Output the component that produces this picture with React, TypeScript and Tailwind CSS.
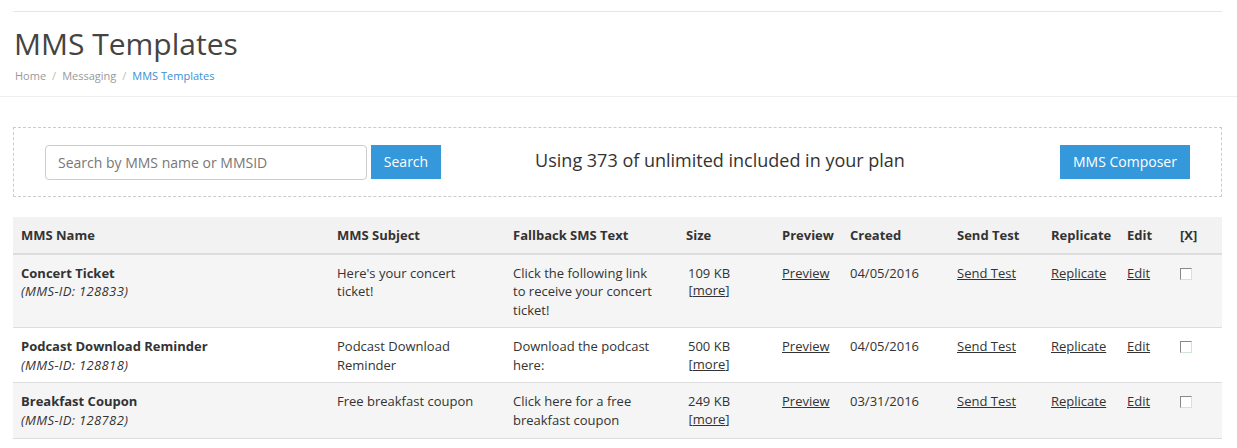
import React from 'react';

interface Row {
  name: string;
  id: string;
  subject: string;
  fallback: string;
  size: string;
  created: string;
}

const rows: Row[] = [
  {
    name: 'Concert Ticket',
    id: '128833',
    subject: "Here's your concert ticket!",
    fallback: 'Click the following link to receive your concert ticket!',
    size: '109 KB',
    created: '04/05/2016',
  },
  {
    name: 'Podcast Download Reminder',
    id: '128818',
    subject: 'Podcast Download Reminder',
    fallback: 'Download the podcast here:',
    size: '500 KB',
    created: '04/05/2016',
  },
  {
    name: 'Breakfast Coupon',
    id: '128782',
    subject: 'Free breakfast coupon',
    fallback: 'Click here for a free breakfast coupon',
    size: '249 KB',
    created: '03/31/2016',
  },
];

const headers = [
  { label: 'MMS Name', w: 'w-[316px]' },
  { label: 'MMS Subject', w: 'w-[176px]' },
  { label: 'Fallback SMS Text', w: 'w-[173px]' },
  { label: 'Size', w: 'w-[96px]' },
  { label: 'Preview', w: 'w-[68px]' },
  { label: 'Created', w: 'w-[107px]' },
  { label: 'Send Test', w: 'w-[94px]' },
  { label: 'Replicate', w: 'w-[76px]' },
  { label: 'Edit', w: 'w-[53px]' },
  { label: '[X]', w: 'w-[50px]' },
];

const TableLink = ({ children }: { children: React.ReactNode }) => (
  <a href="#" className="underline text-[#333] hover:text-[#3498db]">
    {children}
  </a>
);

export default function App() {
  return (
    <div className="min-h-screen bg-white text-[#333] font-['Open_Sans',sans-serif] text-[13px] leading-[1.42857]">
      {/* page header */}
      <div className="border-b border-[#eee] pb-[12px]">
        <div className="mx-[13px] mt-[11px] border-t border-[#e6e6e6] w-[1209px]">
          <h1 className="mt-[14px] text-[30px] leading-[36px] font-normal text-[#444] pl-[1px]">MMS Templates</h1>
          <div className="mt-[6px] pl-[2px] text-[11px] leading-[16px] text-[#999]">
            <a href="#" className="hover:underline">Home</a>
            <span className="mx-[6px] text-[#bbb]">/</span>
            <a href="#" className="hover:underline">Messaging</a>
            <span className="mx-[6px] text-[#bbb]">/</span>
            <span className="text-[#3a8fd3]">MMS Templates</span>
          </div>
        </div>
      </div>

      {/* toolbar */}
      <div className="mx-[13px] mt-[30px] w-[1209px] h-[70px] border border-dashed border-[#ccc] flex items-center pl-[31px] pr-[31px]">
        <input
          type="text"
          placeholder="Search by MMS name or MMSID"
          className="w-[322px] h-[35px] mt-[1px] border border-[#ccc] rounded-[4px] px-[12px] text-[14px] text-[#555] placeholder:text-[#777] outline-none"
        />
        <button className="ml-[4px] w-[70px] h-[34px] -mt-[1px] bg-[#3498db] text-white text-[14px] hover:bg-[#2c87c7]">
          Search
        </button>
        <div className="flex-1 text-center text-[18px] text-[#333] pr-[61px] -mt-[3px]">
          Using 373 of unlimited included in your plan
        </div>
        <button className="w-[130px] h-[34px] -mt-[1px] bg-[#3498db] text-white text-[14px] hover:bg-[#2c87c7]">
          MMS Composer
        </button>
      </div>

      {/* table */}
      <table className="mx-[13px] mt-[20px] w-[1209px] border-collapse table-fixed">
        <thead>
          <tr className="bg-[#f2f2f2] border-b-2 border-[#ddd]">
            {headers.map((h) => (
              <th key={h.label} className={`${h.w} text-left font-bold px-[8px] pt-[9px] pb-[8px]`}>
                {h.label}
              </th>
            ))}
          </tr>
        </thead>
        <tbody>
          {rows.map((r, i) => (
            <tr key={r.id} className={`${i % 2 === 0 ? 'bg-[#f5f5f5]' : 'bg-white'} border-b border-[#ddd] align-top`}>
              <td className="px-[8px] pt-[9px] pb-[8px]">
                <div className="font-bold">{r.name}</div>
                <div className="italic tracking-[0.35px]">(MMS-ID: {r.id})</div>
              </td>
              <td className="pl-[8px] pr-[23px] pt-[9px] pb-[8px]">{r.subject}</td>
              <td className="pl-[8px] pr-[20px] pt-[9px] pb-[8px]">{r.fallback}</td>
              <td className="px-[8px] pt-[9px] pb-[8px]">
                <div className="inline-block text-center pl-[2px]">
                  <div>{r.size}</div>
                  <div className="leading-[16px]">
                    [<TableLink>more</TableLink>]
                  </div>
                </div>
              </td>
              <td className="px-[8px] pt-[9px] pb-[8px]">
                <TableLink>Preview</TableLink>
              </td>
              <td className="px-[8px] pt-[9px] pb-[8px]">{r.created}</td>
              <td className="px-[8px] pt-[9px] pb-[8px]">
                <TableLink>Send Test</TableLink>
              </td>
              <td className="px-[8px] pt-[9px] pb-[8px]">
                <TableLink>Replicate</TableLink>
              </td>
              <td className="px-[8px] pt-[9px] pb-[8px]">
                <TableLink>Edit</TableLink>
              </td>
              <td className="px-[8px] pt-[9px] pb-[8px]">
                <span className="inline-block mt-[4px] w-[12px] h-[12px] border border-[#888] border-r-[#d4e4d4] border-b-[#d4e4d4] bg-white" />
              </td>
            </tr>
          ))}
        </tbody>
      </table>
    </div>
  );
}
